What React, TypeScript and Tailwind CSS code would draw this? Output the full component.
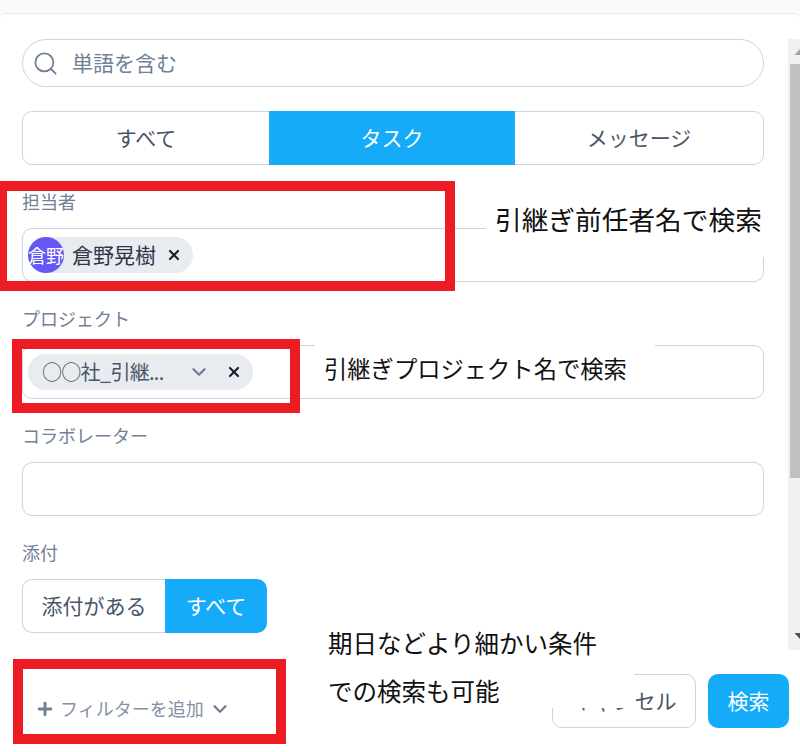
import { ChevronDown, Plus, Search, X } from 'lucide-react';

const font = "font-['Noto_Sans_CJK_JP','Noto_Sans',sans-serif]";

function Field({ label, children, className = '' }: { label: string; children?: React.ReactNode; className?: string }) {
  return (
    <div className={className}>
      <div className="h-[26px] text-[18px] leading-[26px] text-[#718096]">{label}</div>
      <div className="mt-[14px] h-[54px] rounded-[10px] border border-[#cbd5e0] flex items-center px-[5px]">{children}</div>
    </div>
  );
}

export default function App() {
  return (
    <div className={`${font} relative w-[800px] h-[752px] overflow-hidden bg-[#fafafa] pt-[13px]`}>
      <div className="h-[739px] bg-white rounded-t-[6px] border-t border-[#e8e8e8]">
        <div className="flex h-[636px]">
          <div className="w-[788px] pl-[22px] pr-[24px] pt-[25px]">
            {/* keyword */}
            <div className="h-[48px] rounded-full border border-[#cbd5e0] flex items-center pl-[9px] text-[#718096]">
              <Search className="w-[27px] h-[27px] text-[#718096]" strokeWidth={1.6} />
              <span className="ml-[13px] text-[21px]">単語を含む</span>
            </div>

            {/* type tabs */}
            <div className="mt-[24px] h-[54px] grid grid-cols-[246px_246px_1fr] rounded-[10px] border border-[#cbd5e0] text-[21px] text-[#4a5568]">
              <div className="flex items-center justify-center">すべて</div>
              <div className="flex items-center justify-center bg-[#15abf8] text-white -my-px">タスク</div>
              <div className="flex items-center justify-center">メッセージ</div>
            </div>

            <Field label="担当者" className="mt-[23px]">
              <div className="h-[36px] rounded-full bg-[#e8ebef] flex items-center pr-[11px] text-[21px] text-[#2d3748]">
                <div className="w-[36px] h-[36px] rounded-full bg-[#6558f5] text-white text-[18px] leading-[36px] overflow-hidden whitespace-nowrap flex justify-center">
                  倉野
                </div>
                <span className="ml-[8px]">倉野晃樹</span>
                <X className="ml-[10px] w-[16px] h-[16px] text-[#1a202c]" strokeWidth={3.2} />
              </div>
            </Field>

            <Field label="プロジェクト" className="mt-[23px]">
              <div className="h-[36px] w-[225px] rounded-full bg-[#e8ebef] flex items-center pl-[14px] text-[20px] text-[#4a5568]">
                <span className="w-[146px] whitespace-nowrap tracking-[-0.7px]">○○社_引継...</span>
                <ChevronDown className="w-[22px] h-[22px] text-[#718096]" strokeWidth={2.6} />
                <X className="ml-[16px] w-[16px] h-[16px] text-[#1a202c]" strokeWidth={3.2} />
              </div>
            </Field>

            <Field label="コラボレーター" className="mt-[23px]" />

            <div className="mt-[23px]">
              <div className="h-[26px] text-[18px] leading-[26px] text-[#718096]">添付</div>
              <div className="mt-[14px] h-[54px] w-[245px] flex text-[21px]">
                <div className="w-[143px] flex items-center justify-center rounded-l-[10px] border border-r-0 border-[#cbd5e0] text-[#4a5568]">
                  添付がある
                </div>
                <div className="flex-1 flex items-center justify-center rounded-r-[10px] bg-[#15abf8] text-white">すべて</div>
              </div>
            </div>
          </div>

          {/* scrollbar */}
          <div className="w-[12px] mt-[25px] bg-[#f1f1f1] flex flex-col items-end">
            <svg viewBox="0 0 12 25" className="w-[12px] h-[25px]">
              <polygon points="12,10 6.5,16 12,16" fill="#a3a3a3" />
            </svg>
            <div className="h-[414px] w-[10px] bg-[#c1c1c1]" />
            <svg viewBox="0 0 12 25" className="mt-auto w-[12px] h-[25px]">
              <polygon points="6.5,8 12,8 12,14" fill="#505050" />
            </svg>
          </div>
        </div>

        {/* footer */}
        <div className="h-[102px] flex items-start pl-[35px] pr-[11px] pt-[24px]">
          <div className="mt-[21px] flex items-center text-[18px] text-[#8391a5]">
            <Plus className="w-[20px] h-[20px] text-[#718096]" strokeWidth={3.5} />
            <span className="ml-[5px]">フィルターを追加</span>
            <ChevronDown className="ml-[5px] w-[22px] h-[22px] text-[#718096]" strokeWidth={2.6} />
          </div>
          <div className="ml-auto flex gap-[12px] text-[21px]">
            <div className="w-[144px] h-[54px] rounded-[10px] border border-[#cbd5e0] flex items-center justify-center text-[#4a5568] whitespace-nowrap">
              キャンセル
            </div>
            <div className="w-[81px] h-[54px] rounded-[10px] bg-[#15abf8] text-white flex items-center justify-center">検索</div>
          </div>
        </div>
      </div>

      {/* annotations laid over the screenshot */}
      <div className="absolute left-[-3px] top-[181px] w-[458px] h-[110px] border-[10px] border-[#ed1c24]" />
      <div className="absolute left-[12px] top-[339px] w-[288px] h-[74px] border-[10px] border-[#ed1c24]" />
      <div className="absolute left-[13px] top-[659px] w-[273px] h-[85px] border-[10px] border-[#ed1c24]" />

      <div className="absolute left-[486px] top-[196px] w-[278px] h-[61px] bg-white pl-[9px] pb-[14px] flex items-center text-[26.7px] text-[#111] whitespace-nowrap">
        引継ぎ前任者名で検索
      </div>
      <div className="absolute left-[315px] top-[340px] w-[340px] h-[56px] bg-white pl-[9px] flex items-center text-[23.3px] text-[#111] whitespace-nowrap">
        引継ぎプロジェクト名で検索
      </div>
      <div className="absolute left-[320px] top-[619px] w-[314px] h-[89px] bg-white pl-[8px] text-[24.5px] leading-[48px] text-[#111] whitespace-nowrap">
        期日などより細かい条件
        <br />
        での検索も可能
      </div>
    </div>
  );
}
